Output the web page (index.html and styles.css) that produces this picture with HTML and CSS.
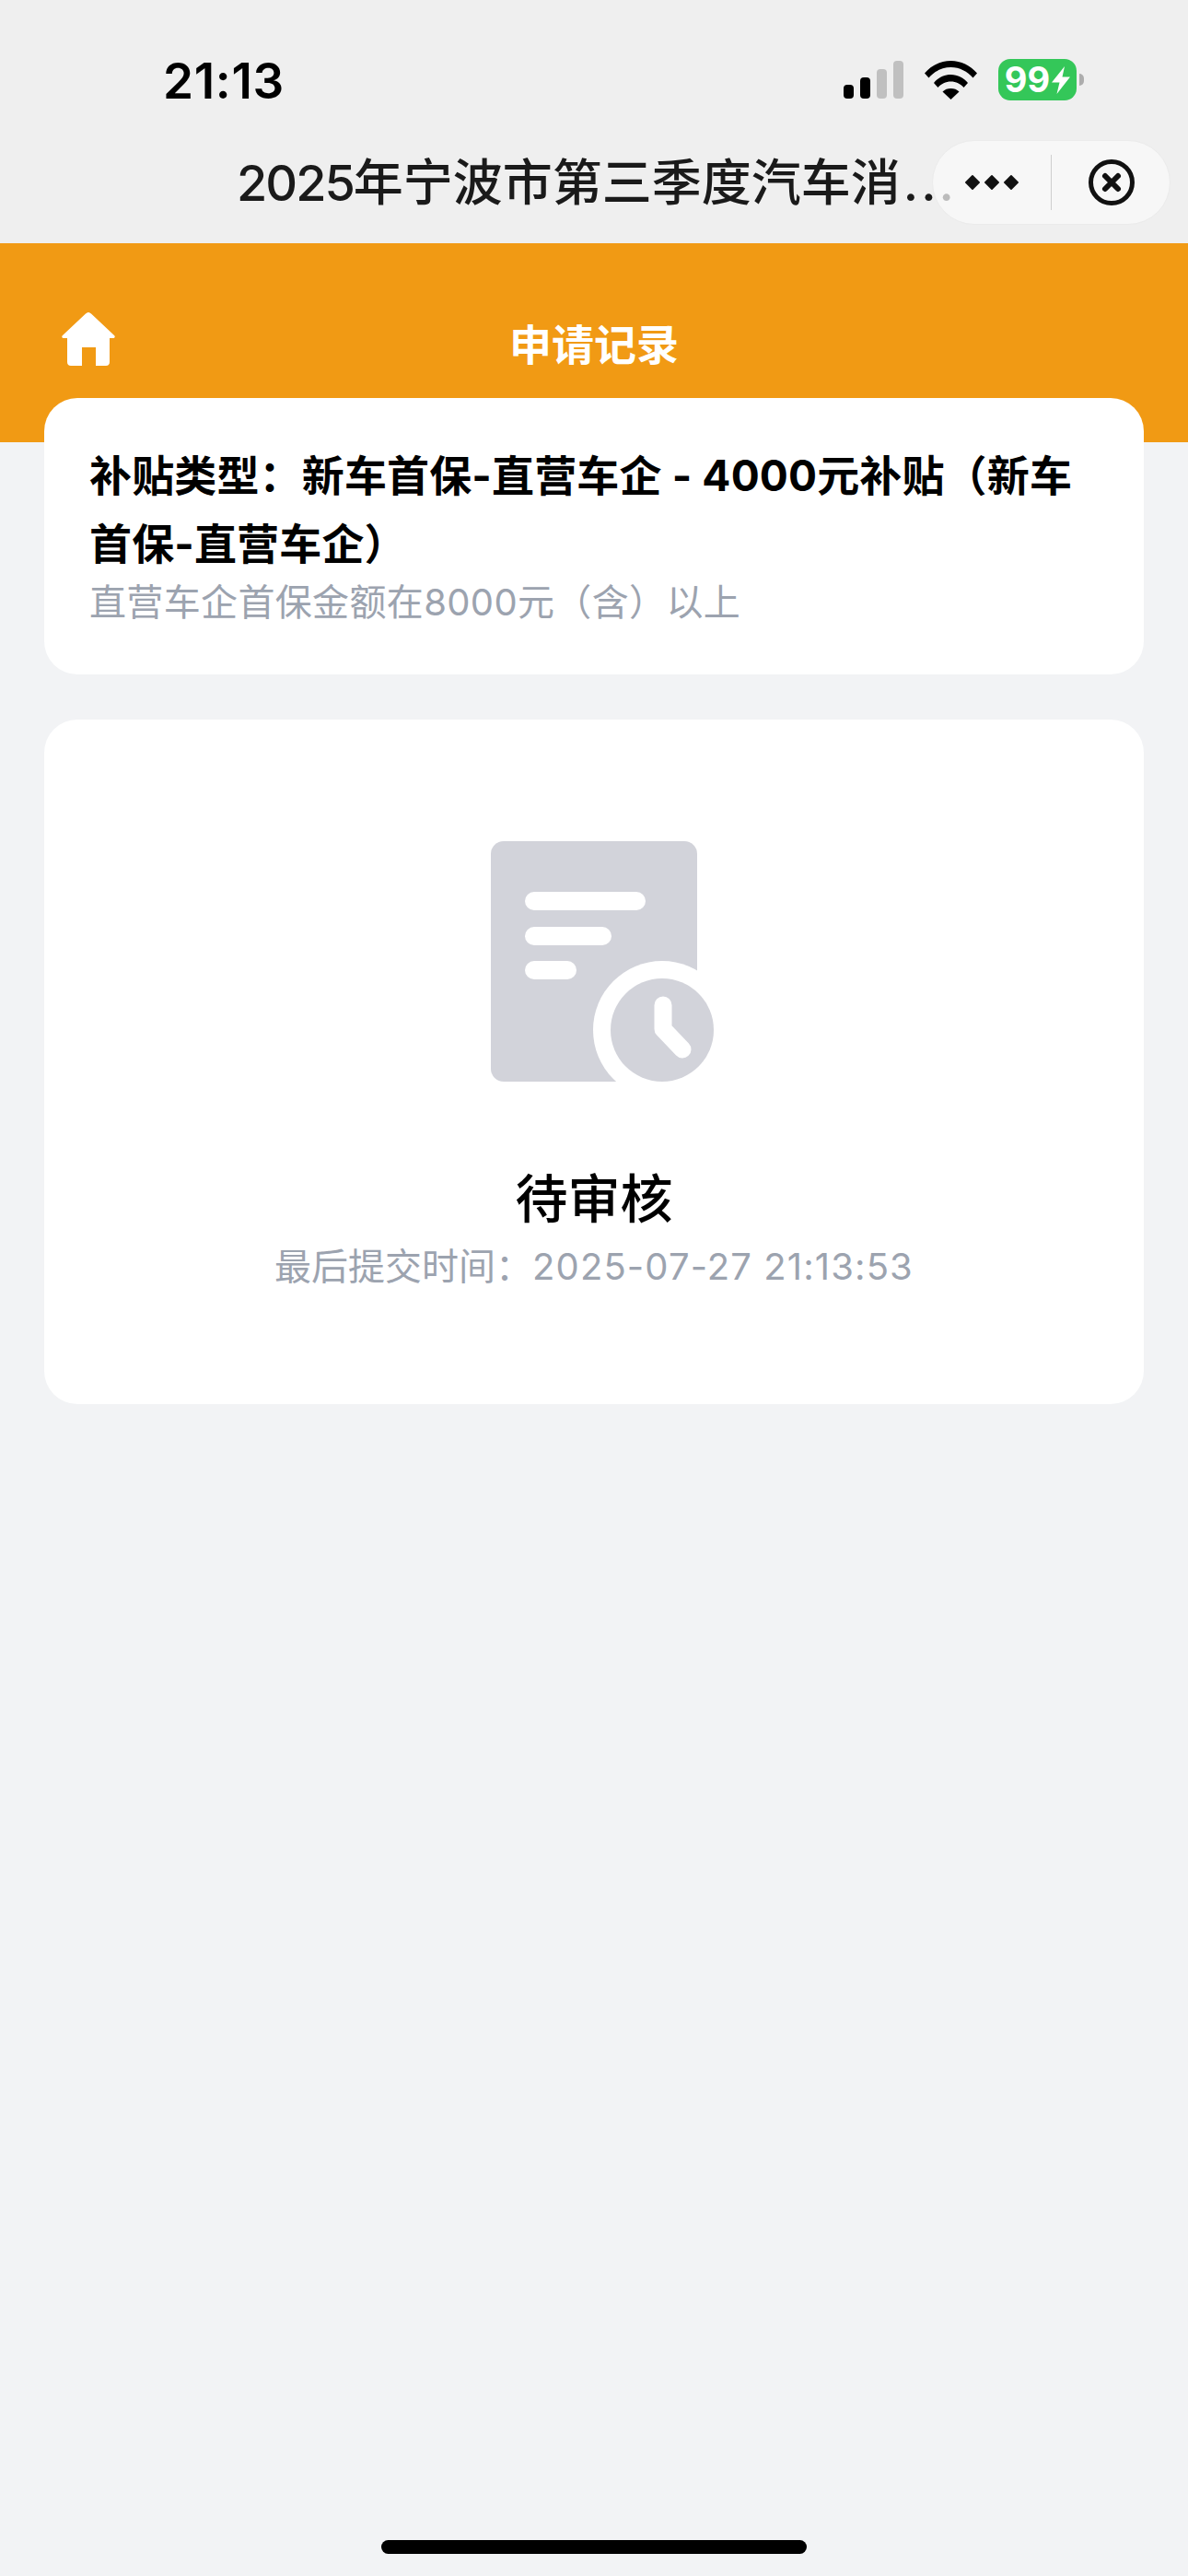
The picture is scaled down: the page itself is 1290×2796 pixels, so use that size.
FILE: index.html
```html
<!DOCTYPE html>
<html lang="zh-CN">
<head>
<meta charset="utf-8">
<title>申请记录</title>
<link rel="stylesheet" href="styles.css">
</head>
<body>
<div class="page">
  <div class="top">
    <div class="status">
      <span class="time">21:13</span>
      <div class="status-icons">
        <svg class="signal" width="65" height="41" viewBox="0 0 65 41">
          <rect x="0" y="26" width="11" height="15" rx="4" fill="#000"/>
          <rect x="18" y="18" width="11" height="23" rx="4" fill="#000"/>
          <rect x="36" y="9" width="11" height="32" rx="4" fill="#c0c0c0"/>
          <rect x="54" y="0" width="11" height="41" rx="4" fill="#c0c0c0"/>
        </svg>
        <svg class="wifi" width="57" height="42" viewBox="0 0 57 42">
          <path d="M0 13.5C7.5 5 17.5 0 28.5 0S49.500 5 57 13.500L52.500 18.500C46.500 11.500 38 7 28.500 7S10.500 11.500 4.500 18.500Z" fill="#000"/>
          <path d="M10 24C14.500 18.500 21 15 28.500 15S42.500 18.500 47 24L42.500 29C39 25 34 22.500 28.500 22.500S18 25 14.500 29Z" fill="#000"/>
          <path d="M19.500 33.500C22 31 25 30 28.500 30S35 31 37.500 33.500L28.500 42Z" fill="#000"/>
        </svg>
        <div class="battery">
          <div class="battery-body">
            <span class="battery-num">99</span>
            <svg class="bolt" width="20" height="30" viewBox="0 0 20 30"><path d="M14 0L0 17.500H8.500L5.500 30L20 11.500H11.500Z" fill="#fff"/></svg>
          </div>
          <div class="battery-nub"></div>
        </div>
      </div>
    </div>
    <div class="nav">
      <div class="nav-title"><span class="year">2025</span>年宁波市第三季度汽车消<span class="dots">...</span></div>
      <div class="capsule">
        <div class="capsule-more"><i></i><i></i><i></i></div>
        <div class="capsule-line"></div>
        <svg class="capsule-close" width="50" height="50" viewBox="0 0 50 50">
          <circle cx="25" cy="25" r="22.500" fill="none" stroke="#111" stroke-width="5"/>
          <path d="M18 18L32 32M32 18L18 32" fill="none" stroke="#111" stroke-width="6" stroke-linecap="round"/>
        </svg>
      </div>
    </div>
  </div>

  <header class="hero">
    <svg class="home" width="58" height="58" viewBox="0 0 58 58">
      <path d="M29 0C30 0 31 .5 32 1.500L57 25C58.500 26.500 57.500 28 56 28H52V54C52 56.500 50.500 58 48 58H37V38H22V58H10C7.500 58 6 56.500 6 54V28H2C.5 28 -.5 26.500 1 25L26 1.500C27 .5 28 0 29 0Z" fill="#fff"/>
    </svg>
    <h1 class="hero-title">申请记录</h1>
  </header>

  <main class="content">
    <section class="card info">
      <h2 class="info-title">补贴类型：新车首保-直营车企 - 4000元补贴（新车首保-直营车企）</h2>
      <p class="info-sub">直营车企首保金额在8000元（含）以上</p>
    </section>
    <section class="card state">
      <svg class="state-icon" width="242" height="261" viewBox="0 0 242 261">
        <rect x="0" y="0" width="224" height="261" rx="14" fill="#d2d3da"/>
        <rect x="37" y="55" width="131" height="20" rx="10" fill="#fff"/>
        <rect x="37" y="93" width="94" height="20" rx="10" fill="#fff"/>
        <rect x="37" y="130" width="56" height="20" rx="10" fill="#fff"/>
        <circle cx="186" cy="205" r="75" fill="#fff"/>
        <rect x="224" y="110" width="18" height="151" fill="#fff"/>
        <circle cx="186" cy="205" r="56" fill="#d2d3da"/>
        <path d="M187 178V204L208 226" fill="none" stroke="#fff" stroke-width="19" stroke-linecap="round" stroke-linejoin="round"/>
      </svg>
      <div class="state-title">待审核</div>
      <div class="state-time">最后提交时间：<span class="stamp">2025-07-27 21:13:53</span></div>
    </section>
  </main>
  <div class="home-bar"></div>
</div>
</body>
</html>
```
FILE: styles.css
```css
* { box-sizing: border-box; }
html, body { margin: 0; padding: 0; }
body { font-family: "Inter", "Noto Sans CJK SC", sans-serif; background: #f2f3f5; }
.page { width: 1290px; height: 2796px; display: flex; flex-direction: column; overflow: hidden; }

.top { background: #efefef; height: 264px; display: flex; flex-direction: column; }
.status { height: 148px; display: flex; justify-content: space-between; align-items: flex-start; padding: 58px 113px 0 177px; }
.time { font-size: 53px; font-weight: 600; line-height: 60px; color: #000; letter-spacing: .7px; }
.status-icons { display: flex; align-items: center; padding-top: 6px; }
.signal { margin-right: 23px; }
.wifi { margin-right: 23px; }
.battery { display: flex; align-items: center; gap: 3px; }
.battery-body { width: 85px; height: 45px; border-radius: 13px; background: #34c759; display: flex; align-items: center; justify-content: center; gap: 2px; }
.battery-num { font-size: 38px; font-weight: 700; line-height: 45px; color: #fff; }
.battery-nub { width: 5px; height: 13px; border-radius: 0 5px 5px 0; background: #adadad; }

.nav { position: relative; flex: 1; display: flex; align-items: center; padding: 0 0 14px 257px; }
.nav-title { font-size: 54px; font-weight: 500; line-height: 72px; color: #1a1a1a; white-space: nowrap; }
.year { letter-spacing: -2px; }
.dots { letter-spacing: 3px; margin-left: 3px; }
.capsule { position: absolute; left: 1012px; top: 4px; width: 259px; height: 92px; border-radius: 46px; background: rgba(250, 250, 250, .72); border: 1px solid #ebebeb; display: flex; align-items: center; }
.capsule-more { width: 128px; display: flex; justify-content: center; gap: 7px; }
.capsule-more i { width: 14px; height: 14px; background: #111; transform: rotate(45deg) scale(.85); border-radius: 1px; display: block; }
.capsule-line { width: 1px; height: 60px; background: #cfcfcf; }
.capsule-close { margin-left: 40px; }

.hero { height: 216px; background: #f19a14; display: flex; justify-content: center; padding-top: 82px; position: relative; }
.home { position: absolute; left: 67px; top: 75px; }
.hero-title { margin: 0; font-size: 46px; font-weight: 700; line-height: 56px; color: #fff; height: 56px; }

.content { margin-top: -48px; padding: 0 48px; display: flex; flex-direction: column; gap: 49px; position: relative; flex: 1; }
.card { background: #fff; border-radius: 36px; }
.info { height: 300px; padding: 47px 48px 0 49px; }
.info-title { margin: 0; font-size: 46px; font-weight: 700; line-height: 74px; color: #000; letter-spacing: .15px; }
.info-sub { margin: 2px 0 0; font-size: 40px; font-weight: 400; line-height: 50px; color: #9ca3af; letter-spacing: .35px; }
.state { height: 743px; display: flex; flex-direction: column; align-items: center; padding-top: 132px; }
.state-icon { margin-left: 18px; flex: none; }
.state-title { margin-top: 90px; font-size: 57px; font-weight: 500; line-height: 76px; color: #000; }
.state-time { margin-top: 9px; font-size: 40px; line-height: 52px; color: #9ca3af; white-space: pre; }
.stamp { letter-spacing: 1.1px; }

.home-bar { position: absolute; left: 414px; top: 2757px; width: 462px; height: 15px; border-radius: 8px; background: #000; }
```
